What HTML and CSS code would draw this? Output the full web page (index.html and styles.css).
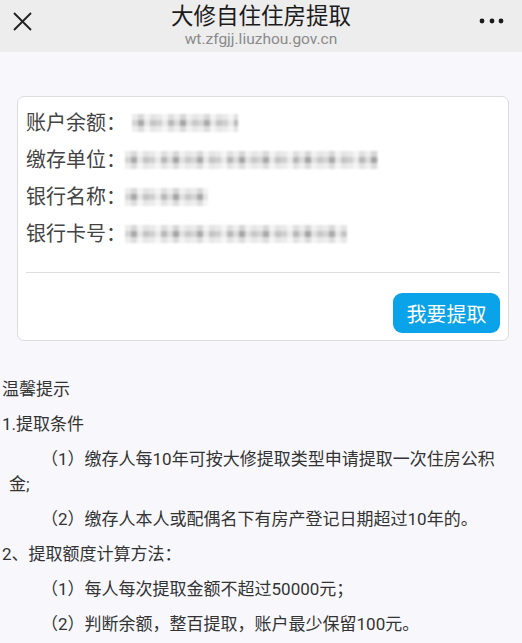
FILE: index.html
```html
<!DOCTYPE html>
<html lang="zh-CN">
<head>
<meta charset="utf-8">
<title>大修自住住房提取</title>
<link rel="stylesheet" href="styles.css">
</head>
<body>
<header class="topbar">
  <div class="tb-left">
    <svg class="icon-close" width="20" height="20" viewBox="0 0 20 20"><path d="M2 2 L19 19 M19 2 L2 19" stroke="#222" stroke-width="1.9" fill="none"/></svg>
  </div>
  <div class="tb-center">
    <div class="tb-title">大修自住住房提取</div>
    <div class="tb-url">wt.zfgjj.liuzhou.gov.cn</div>
  </div>
  <div class="tb-right">
    <svg class="icon-more" width="26" height="6" viewBox="0 0 26 6"><circle cx="3" cy="3" r="2.4" fill="#1a1a1a"/><circle cx="13" cy="3" r="2.4" fill="#1a1a1a"/><circle cx="22" cy="3" r="2.4" fill="#1a1a1a"/></svg>
  </div>
</header>

<main class="page">
  <section class="card">
    <div class="row"><span class="label">账户余额：</span><span class="mosaic m1"></span></div>
    <div class="row"><span class="label">缴存单位：</span><span class="mosaic m2"></span></div>
    <div class="row"><span class="label">银行名称：</span><span class="mosaic m3"></span></div>
    <div class="row"><span class="label">银行卡号：</span><span class="mosaic m4"></span></div>
    <div class="divider"></div>
    <div class="actions"><button class="btn">我要提取</button></div>
  </section>

  <section class="tips">
    <p class="tip">温馨提示</p>
    <p class="tip">1.提取条件</p>
    <p class="tip sub">（1）缴存人每10年可按大修提取类型申请提取一次住房公积金;</p>
    <p class="tip sub">（2）缴存人本人或配偶名下有房产登记日期超过10年的。</p>
    <p class="tip">2、提取额度计算方法：</p>
    <p class="tip sub">（1）每人每次提取金额不超过50000元；</p>
    <p class="tip sub">（2）判断余额，整百提取，账户最少保留100元。</p>
  </section>
</main>
</body>
</html>
```

FILE: styles.css
```css
html, body {
  margin: 0;
  padding: 0;
}
body {
  background: #f8f8fc;
  font-family: Roboto, "Noto Sans CJK SC", sans-serif;
  color: #333;
  width: 522px;
  overflow: hidden;
}

.topbar {
  display: grid;
  grid-template-columns: 60px 1fr 60px;
  height: 52px;
  background: #ededed;
}
.tb-left {
  padding: 11px 0 0 12px;
}
.icon-close, .icon-more { display: block; }
.tb-center {
  display: flex;
  flex-direction: column;
  align-items: center;
}
.tb-title {
  font-size: 22.5px;
  line-height: 28px;
  color: #1b1b1b;
  font-family: "Noto Sans CJK SC", sans-serif;
  white-space: nowrap;
}
.tb-url {
  font-size: 15.5px;
  line-height: 20px;
  color: #8a8a8a;
  margin-top: 1px;
  white-space: nowrap;
}
.tb-right {
  display: flex;
  justify-content: flex-end;
  padding: 18px 17px 0 0;
}

.page {
  padding-top: 44px;
}

.card {
  margin: 0 13px 0 17px;
  background: #fff;
  border: 1px solid #dcdcdc;
  border-radius: 7px;
  padding: 6px 8px 7px 8px;
}
.row {
  display: flex;
  align-items: center;
  height: 37px;
  font-size: 20px;
  color: #444;
  font-family: "Noto Sans CJK SC", sans-serif;
}
.label { white-space: nowrap; }
.mosaic {
  display: inline-block;
  height: 18px;
  margin-top: 3px;
  filter: blur(0.8px);
  background-image:
    linear-gradient(rgba(255,255,255,0.55) 0 6px, rgba(255,255,255,0) 6px 12px, rgba(255,255,255,0.6) 12px 18px),
    repeating-linear-gradient(90deg,
      #d4d4d4 0 6px, #a9a9a9 6px 12px, #e6e6e6 12px 18px, #c4c4c4 18px 24px,
      #cfcfcf 24px 30px, #e9e9e9 30px 36px, #b8b8b8 36px 42px, #dadada 42px 48px,
      #a5a5a5 48px 54px, #e0e0e0 54px 60px, #c8c8c8 60px 66px);
}
.m1 { width: 106px; margin-left: 6px; }
.m2 { width: 253px; margin-left: -1px; }
.m3 { width: 83px; margin-left: -1px; }
.m4 { width: 222px; margin-left: -1px; }

.divider {
  height: 1px;
  background: #dedede;
  margin-top: 21px;
}
.actions {
  display: flex;
  justify-content: flex-end;
  margin-top: 20px;
}
.btn {
  width: 107px;
  height: 40px;
  border: none;
  border-radius: 9px;
  background: #0aa2e8;
  color: #fff;
  font-size: 20px;
  font-family: "Noto Sans CJK SC", sans-serif;
  padding: 0;
}

.tips {
  margin-top: 36px;
  padding-left: 2px;
  padding-right: 8px;
}
.tip {
  margin: 0 0 10px 0;
  font-size: 17px;
  line-height: 25px;
  color: #333;
}
.sub {
  padding-left: 7px;
  text-indent: 32px;
}
```
